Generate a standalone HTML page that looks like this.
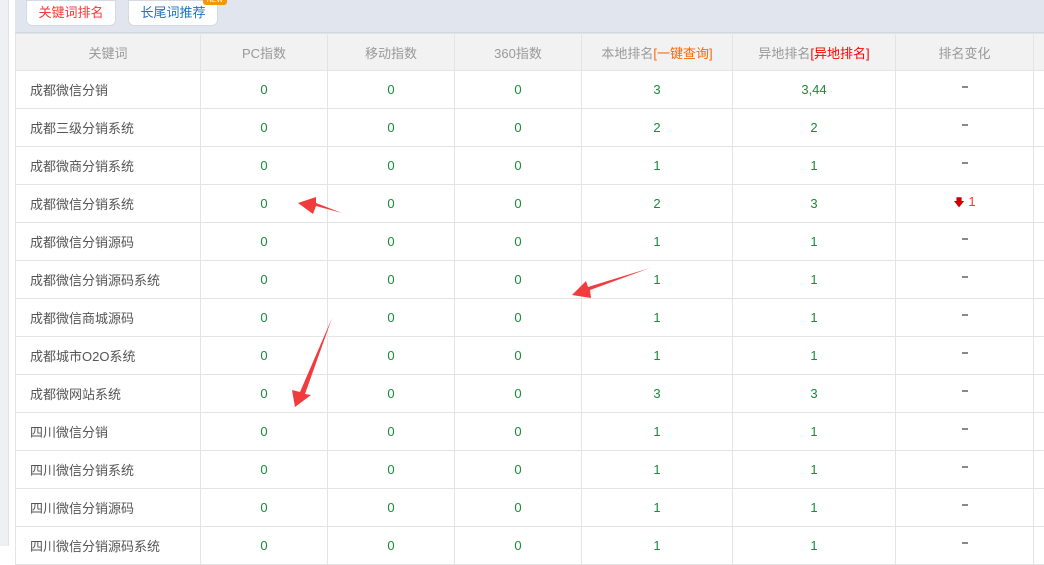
<!DOCTYPE html><html><head><meta charset="utf-8"><style>
body{margin:0;width:1044px;height:546px;overflow:hidden;background:#fff;font-family:"Liberation Sans","Noto Sans CJK SC",sans-serif;position:relative}
.strip{position:absolute;left:0;top:0;width:8px;height:546px;background:#eef0f3;border-right:1px solid #e2e2e2}
.top{position:absolute;left:15px;top:0;width:1029px;height:32px;background:#e1e5ee;border-bottom:1px solid #d0d6e2}
.btn{position:absolute;top:0;height:24px;width:88px;background:#fff;border:1px solid #d5d9e2;border-radius:0 0 6px 6px;font-size:13px;line-height:24px;text-align:center}
.new{position:absolute;left:203px;top:-4px;width:24px;height:9px;background:#f39800;border-radius:3px;color:#fff;font-size:7px;line-height:9px;text-align:center}
table{position:absolute;left:15px;top:33px;width:1030px;border-collapse:collapse;font-size:13px;table-layout:fixed}
td{border:1px solid #e4e4e4;height:37px;padding:0;text-align:center;color:#1a8a3a}
thead td{background:#f2f2f2;color:#999;height:36px}
td.k{text-align:left;padding-left:14px;color:#555}
.d i{display:inline-block;width:6px;height:2px;background:#888;vertical-align:middle;position:relative;top:-4px}
.r{color:#f60}.rr{color:#f00}
</style></head><body>
<div class="strip"></div>
<div class="top"></div>
<div class="btn" style="left:26px;color:#f33">关键词排名</div>
<div class="btn" style="left:128px;color:#1a73c8">长尾词推荐</div>
<div class="new">NEW</div>
<table>
<colgroup><col style="width:185px"><col style="width:127px"><col style="width:127px"><col style="width:127px"><col style="width:151px"><col style="width:163px"><col style="width:138px"><col style="width:12px"></colgroup>
<thead><tr><td>关键词</td><td>PC指数</td><td>移动指数</td><td>360指数</td><td>本地排名<span class="r">[一键查询]</span></td><td>异地排名<span class="rr">[异地排名]</span></td><td>排名变化</td><td></td></tr></thead>
<tbody>
<tr><td class="k">成都微信分销</td><td>0</td><td>0</td><td>0</td><td>3</td><td>3,44</td><td class="d"><i></i></td><td></td></tr>
<tr><td class="k">成都三级分销系统</td><td>0</td><td>0</td><td>0</td><td>2</td><td>2</td><td class="d"><i></i></td><td></td></tr>
<tr><td class="k">成都微商分销系统</td><td>0</td><td>0</td><td>0</td><td>1</td><td>1</td><td class="d"><i></i></td><td></td></tr>
<tr><td class="k">成都微信分销系统</td><td>0</td><td>0</td><td>0</td><td>2</td><td>3</td><td style="color:#f33"><span style="color:#c00;font-size:11px">🡇</span> 1</td><td></td></tr>
<tr><td class="k">成都微信分销源码</td><td>0</td><td>0</td><td>0</td><td>1</td><td>1</td><td class="d"><i></i></td><td></td></tr>
<tr><td class="k">成都微信分销源码系统</td><td>0</td><td>0</td><td>0</td><td>1</td><td>1</td><td class="d"><i></i></td><td></td></tr>
<tr><td class="k">成都微信商城源码</td><td>0</td><td>0</td><td>0</td><td>1</td><td>1</td><td class="d"><i></i></td><td></td></tr>
<tr><td class="k">成都城市O2O系统</td><td>0</td><td>0</td><td>0</td><td>1</td><td>1</td><td class="d"><i></i></td><td></td></tr>
<tr><td class="k">成都微网站系统</td><td>0</td><td>0</td><td>0</td><td>3</td><td>3</td><td class="d"><i></i></td><td></td></tr>
<tr><td class="k">四川微信分销</td><td>0</td><td>0</td><td>0</td><td>1</td><td>1</td><td class="d"><i></i></td><td></td></tr>
<tr><td class="k">四川微信分销系统</td><td>0</td><td>0</td><td>0</td><td>1</td><td>1</td><td class="d"><i></i></td><td></td></tr>
<tr><td class="k">四川微信分销源码</td><td>0</td><td>0</td><td>0</td><td>1</td><td>1</td><td class="d"><i></i></td><td></td></tr>
<tr><td class="k">四川微信分销源码系统</td><td>0</td><td>0</td><td>0</td><td>1</td><td>1</td><td class="d"><i></i></td><td></td></tr>
</tbody></table>
<svg width="1044" height="546" style="position:absolute;left:0;top:0">
<g fill="#f03c3c">
<polygon points="342,213 316,206 313,214 298,203 316,197 316,203"/>
<polygon points="650,268 590,290 591,298 572,295 586,281 588,287"/>
<polygon points="332,318 305,394 311,395 295,407 292,390 300,392"/>
</g></svg>
</body></html>
